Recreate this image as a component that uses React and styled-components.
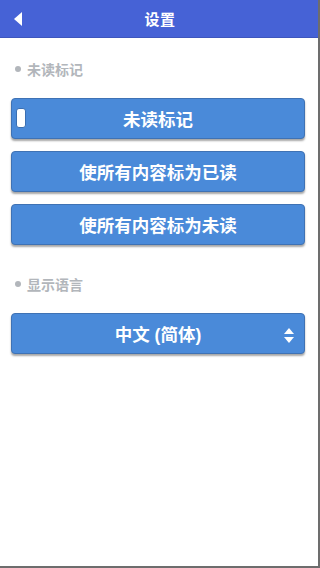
import React from "react";
import styled, { createGlobalStyle } from "styled-components";

const GlobalStyle = createGlobalStyle`
  html, body {
    margin: 0;
    padding: 0;
    background: #ffffff;
  }
  body {
    font-family: "Liberation Sans", "Noto Sans CJK SC", sans-serif;
  }
`;

const Page = styled.div`
  width: 320px;
  height: 568px;
  box-sizing: border-box;
  display: flex;
  flex-direction: column;
  background: #fff;
  border-right: 2px solid #6d6d6d;
  border-bottom: 2px solid #6d6d6d;
  overflow: hidden;
`;

const Header = styled.div`
  height: 38px;
  flex: none;
  display: flex;
  align-items: center;
  justify-content: center;
  position: relative;
  background: #4662d6;
  border-bottom: 1px solid #3e56bd;
  margin-right: -2px;
  box-sizing: border-box;
`;

const BackButton = styled.button`
  position: absolute;
  left: 8px;
  top: 8px;
  width: 20px;
  height: 22px;
  border: 0;
  background: none;
  padding: 0;
  display: flex;
  align-items: center;
  justify-content: center;
`;

const Title = styled.h1`
  margin: 0;
  color: #fff;
  font-size: 15px;
  font-weight: bold;
  letter-spacing: 0.5px;
`;

const Content = styled.div`
  padding: 21px 13px 0 11px;
  display: flex;
  flex-direction: column;
`;

const SectionLabel = styled.div`
  display: flex;
  align-items: center;
  gap: 6px;
  padding-left: 4px;
  height: 20px;
  color: #b2b6bb;
  font-size: 14px;
  font-weight: bold;
  margin-bottom: ${(p) => p.$gap}px;

  &::before {
    content: "";
    width: 6px;
    height: 6px;
    border-radius: 50%;
    background: #b2b6bb;
  }
`;

const ButtonList = styled.div`
  display: flex;
  flex-direction: column;
  gap: 12px;
  margin-bottom: 29px;
`;

const BlueButton = styled.button`
  position: relative;
  width: 100%;
  height: 41px;
  box-sizing: border-box;
  background: #4a8ad9;
  border: 1px solid #3f72b4;
  border-radius: 4px;
  box-shadow: 0 2px 2px rgba(0, 0, 0, 0.35);
  color: #fff;
  font-family: "Liberation Sans", "Noto Sans CJK SC", sans-serif;
  font-size: 17.5px;
  font-weight: bold;
  display: flex;
  align-items: center;
  justify-content: center;
  padding: 0;
`;

const CheckMark = styled.span`
  position: absolute;
  left: 4px;
  top: 9px;
  width: 10px;
  height: 20px;
  box-sizing: border-box;
  background: #fff;
  border: 1px solid #3a6fb2;
  border-radius: 3px;
`;

const Arrows = styled.span`
  position: absolute;
  right: 10px;
  top: 14px;
  display: flex;
  flex-direction: column;
  gap: 3px;
`;

function BackIcon() {
  return (
    <svg width="10" height="16" viewBox="0 0 10 16">
      <polygon points="9,1 9,15 1,8" fill="#fff" />
    </svg>
  );
}

function SelectArrows() {
  return (
    <Arrows>
      <svg width="10" height="6" viewBox="0 0 10 6">
        <polygon points="5,0 10,6 0,6" fill="#fff" />
      </svg>
      <svg width="10" height="6" viewBox="0 0 10 6">
        <polygon points="0,0 10,0 5,6" fill="#fff" />
      </svg>
    </Arrows>
  );
}

export default function App() {
  return (
    <>
      <GlobalStyle />
      <Page>
        <Header>
          <BackButton aria-label="返回">
            <BackIcon />
          </BackButton>
          <Title>设置</Title>
        </Header>
        <Content>
          <SectionLabel $gap={19}>未读标记</SectionLabel>
          <ButtonList>
            <BlueButton>
              <CheckMark />
              未读标记
            </BlueButton>
            <BlueButton>使所有内容标为已读</BlueButton>
            <BlueButton>使所有内容标为未读</BlueButton>
          </ButtonList>
          <SectionLabel $gap={19}>显示语言</SectionLabel>
          <BlueButton>
            中文 (简体)
            <SelectArrows />
          </BlueButton>
        </Content>
      </Page>
    </>
  );
}
